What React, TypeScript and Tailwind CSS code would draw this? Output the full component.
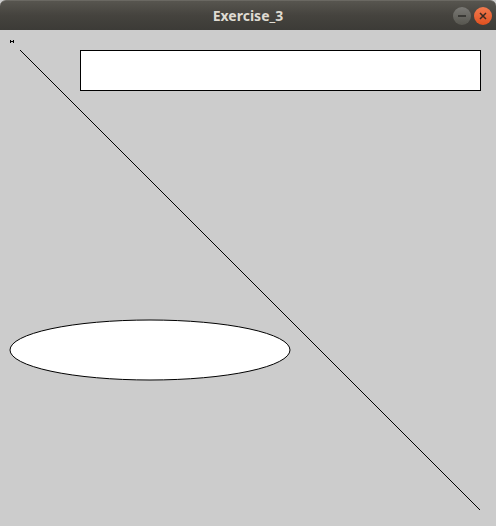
const TitleBar = () => (
  <div className="relative flex h-[30px] items-center justify-center rounded-t-[6px] bg-gradient-to-b from-[#57554f] via-[#45433e] to-[#3c3b37] border-t border-[#6a6862]">
    <span className="font-['Noto_Sans',sans-serif] text-[14px] font-bold text-[#dfdbd2] leading-none">
      Exercise_3
    </span>
    <div className="absolute right-[4px] top-[6px] flex items-center gap-[3px]">
      <div className="flex h-[18px] w-[18px] items-center justify-center rounded-full bg-gradient-to-b from-[#7a7975] to-[#57564f]">
        <div className="h-[2px] w-[8px] bg-[#3a3935]" />
      </div>
      <div className="flex h-[18px] w-[18px] items-center justify-center rounded-full bg-gradient-to-b from-[#f27a4e] to-[#e0501d]">
        <svg width="8" height="8" viewBox="0 0 8 8">
          <path d="M1 1 L7 7 M7 1 L1 7" stroke="#3a2a22" strokeWidth="1.5" />
        </svg>
      </div>
    </div>
  </div>
);

export default function App() {
  return (
    <div className="flex h-[526px] w-[496px] flex-col bg-[#cccccc]">
      <TitleBar />
      <svg width="496" height="496" className="block bg-[#cccccc]">
        {/* tiny point marker */}
        <rect x="10" y="10" width="1" height="3" fill="#000" />
        <rect x="13" y="10" width="1" height="3" fill="#000" />
        <rect x="11" y="11" width="2" height="1" fill="#000" />
        <line x1="20" y1="20" x2="480" y2="480" stroke="#000" strokeWidth="1" />
        <rect x="80.5" y="20.5" width="400" height="40" fill="#fff" stroke="#000" strokeWidth="1" />
        <ellipse cx="150" cy="320" rx="140" ry="30" fill="#fff" stroke="#000" strokeWidth="1" />
      </svg>
    </div>
  );
}
